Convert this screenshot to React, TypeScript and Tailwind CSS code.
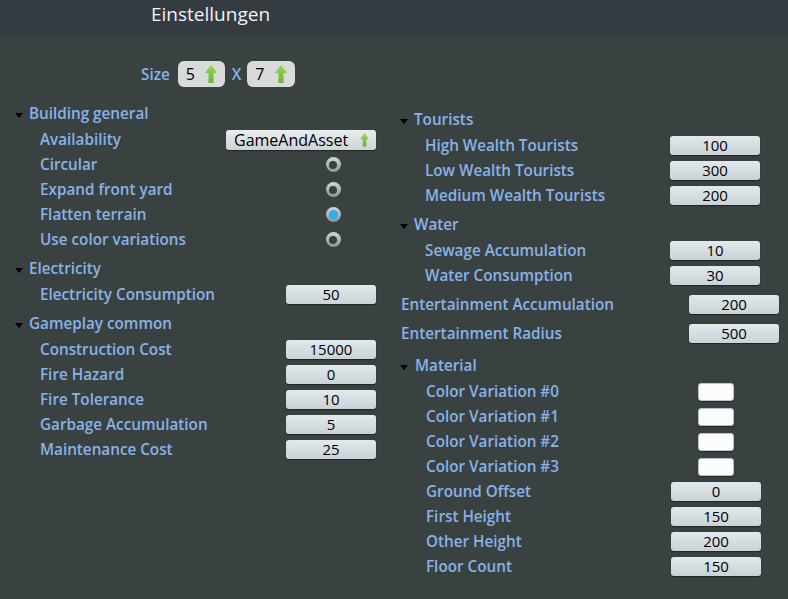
import React from 'react';

type Item = { label: string; kind: 'num' | 'radio' | 'swatch' | 'select'; value?: string; on?: boolean };
type Section = { title: string; items: Item[] };

const leftSections: Section[] = [
  {
    title: 'Building general',
    items: [
      { label: 'Availability', kind: 'select', value: 'GameAndAsset' },
      { label: 'Circular', kind: 'radio' },
      { label: 'Expand front yard', kind: 'radio' },
      { label: 'Flatten terrain', kind: 'radio', on: true },
      { label: 'Use color variations', kind: 'radio' },
    ],
  },
  { title: 'Electricity', items: [{ label: 'Electricity Consumption', kind: 'num', value: '50' }] },
  {
    title: 'Gameplay common',
    items: [
      { label: 'Construction Cost', kind: 'num', value: '15000' },
      { label: 'Fire Hazard', kind: 'num', value: '0' },
      { label: 'Fire Tolerance', kind: 'num', value: '10' },
      { label: 'Garbage Accumulation', kind: 'num', value: '5' },
      { label: 'Maintenance Cost', kind: 'num', value: '25' },
    ],
  },
];

const tourists: Section = {
  title: 'Tourists',
  items: [
    { label: 'High Wealth Tourists', kind: 'num', value: '100' },
    { label: 'Low Wealth Tourists', kind: 'num', value: '300' },
    { label: 'Medium Wealth Tourists', kind: 'num', value: '200' },
  ],
};

const water: Section = {
  title: 'Water',
  items: [
    { label: 'Sewage Accumulation', kind: 'num', value: '10' },
    { label: 'Water Consumption', kind: 'num', value: '30' },
  ],
};

const material: Section = {
  title: 'Material',
  items: [
    { label: 'Color Variation #0', kind: 'swatch' },
    { label: 'Color Variation #1', kind: 'swatch' },
    { label: 'Color Variation #2', kind: 'swatch' },
    { label: 'Color Variation #3', kind: 'swatch' },
    { label: 'Ground Offset', kind: 'num', value: '0' },
    { label: 'First Height', kind: 'num', value: '150' },
    { label: 'Other Height', kind: 'num', value: '200' },
    { label: 'Floor Count', kind: 'num', value: '150' },
  ],
};

const GreenArrow = ({ w, h }: { w: number; h: number }) => (
  <svg width={w} height={h} viewBox="0 0 12 18">
    <defs>
      <linearGradient id="ga" x1="0" y1="0" x2="0" y2="1">
        <stop offset="0" stopColor="#9bd55a" />
        <stop offset="1" stopColor="#6cb23a" />
      </linearGradient>
    </defs>
    <path d="M6 0 L12 8 L8.5 8 L8.5 18 L3.5 18 L3.5 8 L0 8 Z" fill="url(#ga)" />
  </svg>
);

const NumBox = ({ value }: { value?: string }) => (
  <div className="flex h-[19px] w-[90px] items-center justify-center rounded-[3px] bg-gradient-to-b from-[#e2e9ec] to-[#c9d2d6] text-[15px] font-normal leading-none text-black shadow-[0_1px_1px_rgba(0,0,0,0.45)]">
    {value}
  </div>
);

const Control = ({ item }: { item: Item }) => {
  if (item.kind === 'num') return <NumBox value={item.value} />;
  if (item.kind === 'swatch')
    return (
      <div className="mr-[27px] h-[18px] w-[36px] rounded-[3px] border border-[#b9c1c6] bg-[#fbfcfd] shadow-[0_1px_1px_rgba(0,0,0,0.4)]" />
    );
  if (item.kind === 'radio')
    return (
      <div className="flex w-[90px] justify-center pl-[4px]">
        <div className="flex h-[15px] w-[15px] items-center justify-center rounded-full bg-gradient-to-b from-[#d4d8da] to-[#8e9496]">
          <div
            className={
              item.on
                ? 'h-[9px] w-[9px] rounded-full bg-[#22b4ee]'
                : 'h-[8px] w-[8px] rounded-full bg-[#3a3f40]'
            }
          />
        </div>
      </div>
    );
  return (
    <div className="flex h-[20px] w-[150px] items-center justify-between rounded-[3px] bg-gradient-to-b from-[#e8edee] to-[#cdd4d6] pl-[8px] pr-[7px] text-[16px] font-normal leading-none text-black shadow-[0_1px_1px_rgba(0,0,0,0.45)]">
      <span>{item.value}</span>
      <GreenArrow w={9} h={14} />
    </div>
  );
};

const Tri = () => <span className="mt-[4px] inline-block h-0 w-0 border-x-[4px] border-t-[5px] border-x-transparent border-t-black" />;

const Row = ({ item, indent }: { item: Item; indent: string }) => (
  <div className={`flex h-[25px] items-center justify-between ${indent}`}>
    <span>{item.label}</span>
    <Control item={item} />
  </div>
);

const Group = ({ s, gap, indent, className }: { s: Section; gap: string; indent: string; className?: string }) => (
  <div className={className}>
    <div className="flex h-[27px] items-center pb-[1px]">
      <Tri />
      <span className={gap}>{s.title}</span>
    </div>
    {s.items.map((it) => (
      <Row key={it.label} item={it} indent={indent} />
    ))}
  </div>
);

export default function App() {
  return (
    <div className="h-[599px] w-[788px] overflow-hidden bg-[#3a4241] font-['Open_Sans',sans-serif] text-[15.25px] font-semibold text-[#88b2e8]">
      <div className="h-[36px] bg-[#343b41] pl-[151px] pt-[1px] text-[19px] font-normal leading-[26px] text-[#f2f2f2]">
        Einstellungen
      </div>

      <div className="mt-[25px] flex h-[26px] items-center pl-[141px]">
        <span>Size</span>
        <div className="ml-[8px] flex h-[26px] w-[47px] items-center rounded-[6px] bg-[#d9dada] pl-[8px] text-[16px] font-normal text-black">
          <span className="w-[19px]">5</span>
          <GreenArrow w={12} h={18} />
        </div>
        <span className="ml-[7px]">X</span>
        <div className="ml-[6px] flex h-[26px] w-[48px] items-center rounded-[6px] bg-[#d9dada] pl-[8px] text-[16px] font-normal text-black">
          <span className="w-[20px]">7</span>
          <GreenArrow w={12} h={18} />
        </div>
      </div>

      <div className="mt-[13px] flex">
        <div className="w-[398px] pl-[15px] pr-[22px]">
          {leftSections.map((s, i) => (
            <Group key={s.title} s={s} gap="ml-[6px]" indent="pl-[25px]" className={i > 0 ? 'mt-[3px]' : ''} />
          ))}
        </div>

        <div className="w-[390px] pl-[2px] pr-[9px] pt-[6px]">
          <div className="pr-[19px]">
            <Group s={tourists} gap="ml-[6px]" indent="pl-[25px]" />
            <Group s={water} gap="ml-[6px]" indent="pl-[25px]" className="mt-[3px]" />
          </div>
          <div className="mt-[4px] flex h-[25px] items-center justify-between pl-[1px]">
            <span>Entertainment Accumulation</span>
            <NumBox value="200" />
          </div>
          <div className="mt-[4px] flex h-[25px] items-center justify-between pl-[1px]">
            <span>Entertainment Radius</span>
            <NumBox value="500" />
          </div>
          <div className="pr-[18px]">
            <Group s={material} gap="ml-[7px]" indent="pl-[26px]" className="mt-[6px]" />
          </div>
        </div>
      </div>
    </div>
  );
}
